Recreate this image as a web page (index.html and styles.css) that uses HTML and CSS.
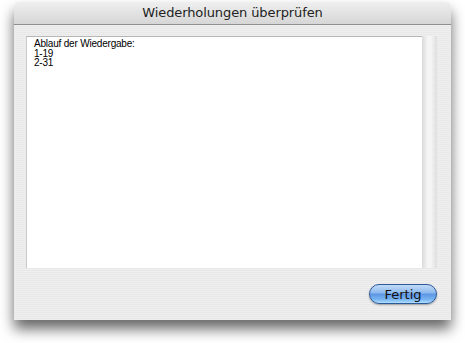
FILE: index.html
```html
<!DOCTYPE html>
<html lang="de">
<head>
    <meta charset="UTF-8">
    <title>Wiederholungen überprüfen</title>
    <link rel="stylesheet" href="styles.css">
</head>
<body>
    <div class="window">
        <div class="titlebar">Wiederholungen überprüfen</div>
        <div class="content">
            <div class="scroll-view">
                <div class="text-area">
                    Ablauf der Wiedergabe:<br>
                    1-19<br>
                    2-31
                </div>
                <div class="scroll-track"></div>
            </div>
            <div class="actions">
                <button class="btn-default">Fertig</button>
            </div>
        </div>
    </div>
</body>
</html>
```
FILE: styles.css
```css
html, body {
    height: 100%;
}
body {
    margin: 0;
    padding-top: 2px;
    box-sizing: border-box;
    min-height: 343px;
    background-color: #ffffff;
    font-family: "Lucida Grande", "DejaVu Sans", sans-serif;
}
.window {
    width: 437px;
    height: 318px;
    margin-left: 14px;
    border-radius: 5px 5px 0 0;
    box-shadow: 0 9px 14px rgba(0, 0, 0, 0.6);
    display: flex;
    flex-direction: column;
    overflow: hidden;
}
.titlebar {
    height: 22px;
    line-height: 22px;
    text-align: center;
    font-size: 13px;
    letter-spacing: -0.1px;
    color: #222;
    background: linear-gradient(#efefef, #d6d6d6);
    border-bottom: 1px solid #8f8f8f;
}
.content {
    flex: 1;
    padding: 11px 14px 0 12px;
    background: repeating-linear-gradient(#efefef 0, #efefef 1px, #e8e8e8 1px, #e8e8e8 2px);
}
.scroll-view {
    display: flex;
    height: 232px;
}
.text-area {
    flex: 1;
    background-color: #fff;
    border-top: 1px solid #b5b5b5;
    border-left: 1px solid #c8c8c8;
    padding: 2px 0 0 7px;
    font-family: "Liberation Sans", Arial, sans-serif;
    font-size: 10px;
    line-height: 9.5px;
    letter-spacing: -0.2px;
    color: #000;
}
.scroll-track {
    width: 15px;
    background: linear-gradient(to right, #dadada, #f6f6f6 40%, #f4f4f4 60%, #dedede);
}
.actions {
    display: flex;
    justify-content: flex-end;
    padding-top: 16px;
}
.btn-default {
    width: 68px;
    height: 20px;
    padding: 0;
    border: 1px solid #2d5a9b;
    border-radius: 10px;
    font-family: "Lucida Grande", "DejaVu Sans", sans-serif;
    font-size: 13px;
    color: #111;
    background: linear-gradient(#c3dbf6 0%, #8ab8ee 45%, #5c95e2 50%, #78b4f2 80%, #b0e0ff 100%);
    box-shadow: 0 1px 2px rgba(0, 0, 0, 0.35);
}
```
